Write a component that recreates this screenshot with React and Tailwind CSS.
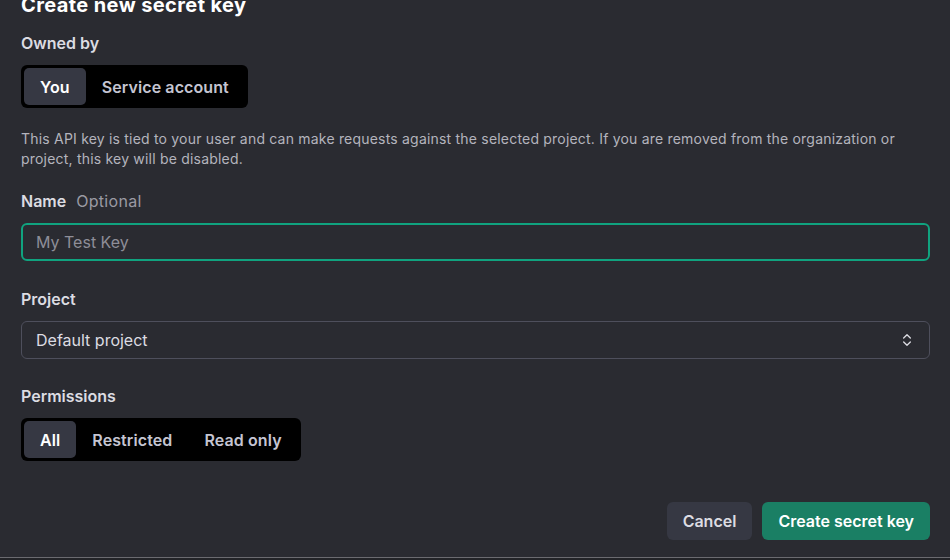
import React, { useState } from "react";
import { ChevronsUpDown } from "lucide-react";

const Segmented = ({ options, value, onChange }) => (
  <div className="inline-flex items-center bg-black rounded-md p-[3px] h-[43px]">
    {options.map((opt) => (
      <button
        key={opt}
        onClick={() => onChange(opt)}
        className={`h-full rounded-[5px] px-4 text-base font-semibold tracking-[0.1px] ${
          value === opt ? "bg-[#363843] text-white" : "text-[#c5c5d2]"
        }`}
      >
        {opt}
      </button>
    ))}
  </div>
);

const Label = ({ children }) => (
  <div className="text-base font-semibold text-[#dcdce2] leading-5">{children}</div>
);

export default function App() {
  const [owner, setOwner] = useState("You");
  const [perm, setPerm] = useState("All");

  return (
    <div
      className="w-[950px] h-[560px] overflow-hidden bg-[#2a2b31] text-[#ececf1] relative"
      style={{ fontFamily: "Inter, 'Liberation Sans', sans-serif" }}
    >
      <div className="pl-[21px] pr-[20px] -mt-[9px]">
        <h2 className="text-xl font-bold text-white leading-7 tracking-[0.4px]">Create new secret key</h2>

        <div className="mt-[14px]">
          <Label>Owned by</Label>
        </div>
        <div className="mt-[12px]">
          <Segmented options={["You", "Service account"]} value={owner} onChange={setOwner} />
        </div>

        <p className="mt-[21px] text-sm leading-5 text-[#b4b4bd] tracking-[0.2px]">
          This API key is tied to your user and can make requests against the selected project. If you are removed
          from the organization or project, this key will be disabled.
        </p>

        <div className="mt-[20px] flex items-baseline gap-[10px] leading-5">
          <span className="text-base font-semibold text-[#dcdce2]">Name</span>
          <span className="text-base text-[#9a9aa3] tracking-[0.3px]">Optional</span>
        </div>
        <input
          autoFocus
          placeholder="My Test Key"
          className="mt-[10px] w-full h-[38px] rounded-md border-2 border-[#10a37f] bg-transparent px-[13px] text-base text-white placeholder:text-[#8e8e98] outline-none"
        />

        <div className="mt-[28px]">
          <Label>Project</Label>
        </div>
        <button className="mt-[12px] w-full h-[38px] rounded-md border border-[#4e4f5c] flex items-center justify-between px-[14px] text-base text-[#dcdce2]">
          <span>Default project</span>
          <ChevronsUpDown className="w-4 h-4 text-[#dcdce2]" strokeWidth={2} />
        </button>

        <div className="mt-[27px]">
          <Label>Permissions</Label>
        </div>
        <div className="mt-[12px]">
          <Segmented options={["All", "Restricted", "Read only"]} value={perm} onChange={setPerm} />
        </div>

        <div className="mt-[41px] flex justify-end gap-[10px]">
          <button className="h-[38px] px-[16px] rounded-md bg-[#363843] text-base font-semibold text-[#dcdce2]">
            Cancel
          </button>
          <button className="h-[38px] px-[16px] rounded-md bg-[#1a7f64] text-base font-semibold text-white">
            Create secret key
          </button>
        </div>
      </div>

      <div className="absolute left-0 right-0 bottom-[2px] h-px bg-[#6b6b70]" />
      <div className="absolute left-0 right-0 bottom-0 h-[2px] bg-[#232428]" />
    </div>
  );
}
